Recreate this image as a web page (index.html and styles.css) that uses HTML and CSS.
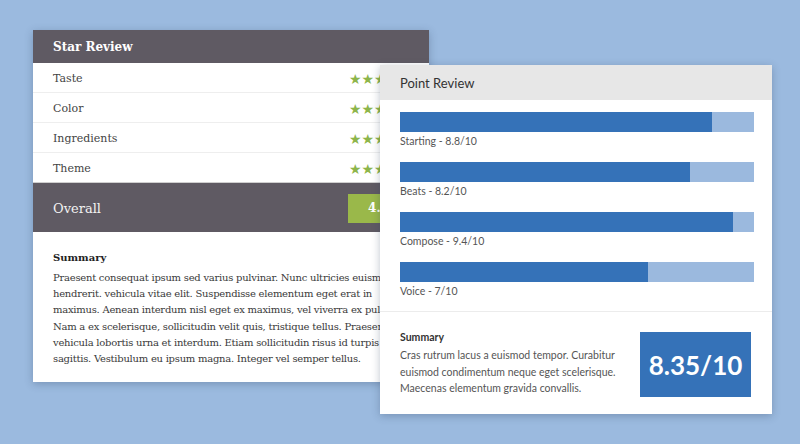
FILE: index.html
```html
<!DOCTYPE html>
<html>
<head>
    <meta charset="UTF-8">
    <title>Review Boxes</title>
    <!-- Estilos da página -->
    <link rel="stylesheet" href="styles.css">
</head>
<body>
    <div class="stage">
        <!-- Caixa de avaliação por estrelas -->
        <div class="card star-card">
            <div class="star-head">Star Review</div>
            <div class="star-row">
                <span>Taste</span>
                <span class="stars">★★★★★</span>
            </div>
            <div class="star-row">
                <span>Color</span>
                <span class="stars">★★★★★</span>
            </div>
            <div class="star-row">
                <span>Ingredients</span>
                <span class="stars">★★★★★</span>
            </div>
            <div class="star-row">
                <span>Theme</span>
                <span class="stars">★★★★★</span>
            </div>
            <div class="overall">
                <span>Overall</span>
                <span class="overall-score">4.5</span>
            </div>
            <div class="star-summary">
                <h4>Summary</h4>
                <p>Praesent consequat ipsum sed varius pulvinar. Nunc ultricies euismod<br>
                hendrerit. vehicula vitae elit. Suspendisse elementum eget erat in<br>
                maximus. Aenean interdum nisl eget ex maximus, vel viverra ex pulvinar.<br>
                Nam a ex scelerisque, sollicitudin velit quis, tristique tellus. Praesent<br>
                vehicula lobortis urna et interdum. Etiam sollicitudin risus id turpis a<br>
                sagittis. Vestibulum eu ipsum magna. Integer vel semper tellus.</p>
            </div>
        </div>

        <!-- Caixa de avaliação por pontos -->
        <div class="card point-card">
            <div class="point-head">Point Review</div>
            <div class="point-list">
                <div class="point-item">
                    <div class="bar"><div class="fill" style="width: 88%"></div></div>
                    <div class="bar-label">Starting - 8.8/10</div>
                </div>
                <div class="point-item">
                    <div class="bar"><div class="fill" style="width: 82%"></div></div>
                    <div class="bar-label">Beats - 8.2/10</div>
                </div>
                <div class="point-item">
                    <div class="bar"><div class="fill" style="width: 94%"></div></div>
                    <div class="bar-label">Compose - 9.4/10</div>
                </div>
                <div class="point-item">
                    <div class="bar"><div class="fill" style="width: 70%"></div></div>
                    <div class="bar-label">Voice - 7/10</div>
                </div>
            </div>
            <div class="point-summary">
                <div class="point-text">
                    <h4>Summary</h4>
                    <p>Cras rutrum lacus a euismod tempor. Curabitur<br>
                    euismod condimentum neque eget scelerisque.<br>
                    Maecenas elementum gravida convallis.</p>
                </div>
                <div class="point-score">8.35/10</div>
            </div>
        </div>
    </div>
</body>
</html>
```

FILE: styles.css
```css
body {
    background-color: #9bbadf;
    margin: 0;
}
.stage {
    position: relative;
    width: 800px;
    height: 444px;
    overflow: hidden;
}
.card {
    background-color: #FFFFFF;
    box-shadow: 0 2px 8px rgba(40, 60, 90, 0.3);
}

/* Star Review */
.star-card {
    font-family: "DejaVu Serif", serif;
    margin-left: 33px;
    margin-top: 30px;
    width: 396px;
    overflow: hidden;
}
.star-head {
    background-color: #5f5a63;
    color: #FFFFFF;
    font-size: 12px;
    font-weight: bold;
    height: 33px;
    line-height: 35px;
    padding-left: 20px;
}
.star-row {
    display: flex;
    align-items: center;
    justify-content: space-between;
    height: 27px;
    padding: 2px 20px 0 20px;
    border-bottom: 1px solid #eeeeee;
    color: #444444;
    font-size: 11px;
}
.star-row:nth-child(5) {
    border-bottom: 1px solid #cfcfcf;
}
.stars {
    color: #8db54a;
    font-family: "DejaVu Sans", sans-serif;
    font-size: 14px;
    width: 60px;
}
.overall {
    display: flex;
    align-items: center;
    justify-content: space-between;
    background-color: #5f5a63;
    color: #f2f2f2;
    font-size: 13px;
    height: 47px;
    padding: 2px 20px 0 20px;
}
.overall-score {
    background-color: #9ab84a;
    color: #FFFFFF;
    font-size: 12px;
    font-weight: bold;
    width: 61px;
    height: 29px;
    line-height: 29px;
    text-align: center;
}
.star-summary {
    padding: 20px 20px 15px 20px;
    color: #3a3a3a;
}
.star-summary h4 {
    margin: 0 0 7px 0;
    font-size: 10px;
    color: #222222;
}
.star-summary p {
    margin: 0;
    font-size: 10px;
    letter-spacing: -0.25px;
    line-height: 16.2px;
    white-space: nowrap;
}

/* Point Review */
.point-card {
    position: absolute;
    left: 380px;
    top: 65px;
    width: 392px;
    height: 349px;
    font-family: Lato, sans-serif;
}
.point-head {
    background-color: #e7e7e7;
    color: #333333;
    font-size: 13px;
    height: 35px;
    line-height: 37px;
    padding-left: 20px;
}
.point-list {
    padding: 12px 18px 11px 20px;
    border-bottom: 1px solid #ececec;
}
.point-item {
    margin-bottom: 12px;
}
.point-item:last-child {
    margin-bottom: 0;
}
.bar {
    background-color: #9bb9de;
    height: 20px;
}
.fill {
    background-color: #3572b8;
    height: 20px;
}
.bar-label {
    color: #555555;
    font-size: 10.5px;
    line-height: 17px;
    padding-top: 1px;
}
.point-summary {
    display: flex;
    align-items: flex-start;
    justify-content: space-between;
    padding: 18px 21px 18px 20px;
}
.point-text h4 {
    margin: 0 0 3px 0;
    font-size: 10.5px;
    line-height: 14px;
    font-weight: bold;
    color: #333333;
}
.point-text p {
    margin: 0;
    color: #555555;
    font-size: 10.5px;
    line-height: 16.5px;
}
.point-score {
    background-color: #3572b8;
    color: #FFFFFF;
    font-size: 26px;
    font-weight: bold;
    width: 111px;
    height: 65px;
    line-height: 66px;
    margin-top: 2px;
    text-align: center;
}
```
